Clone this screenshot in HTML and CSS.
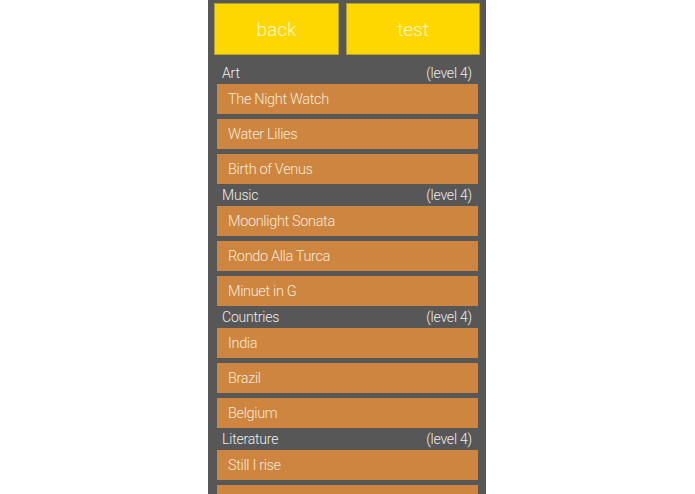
FILE: index.html
```html
<!DOCTYPE html>
<html>
<head>
<meta charset="utf-8">
<link rel="stylesheet" href="styles.css">
</head>
<body>
<div class="column">
  <div class="buttons">
    <div class="btn btn-back">back</div>
    <div class="btn btn-test">test</div>
  </div>
  <div class="section">
    <div class="header"><span>Art</span><span>(level 4)</span></div>
    <div class="items">
      <div class="item">The Night Watch</div>
      <div class="item">Water Lilies</div>
      <div class="item">Birth of Venus</div>
    </div>
  </div>
  <div class="section">
    <div class="header"><span>Music</span><span>(level 4)</span></div>
    <div class="items">
      <div class="item">Moonlight Sonata</div>
      <div class="item">Rondo Alla Turca</div>
      <div class="item">Minuet in G</div>
    </div>
  </div>
  <div class="section">
    <div class="header"><span>Countries</span><span>(level 4)</span></div>
    <div class="items">
      <div class="item">India</div>
      <div class="item">Brazil</div>
      <div class="item">Belgium</div>
    </div>
  </div>
  <div class="section">
    <div class="header"><span>Literature</span><span>(level 4)</span></div>
    <div class="items">
      <div class="item">Still I rise</div>
      <div class="item"></div>
      <div class="item"></div>
    </div>
  </div>
</div>
</body>
</html>
```
FILE: styles.css
```css
html, body {
  margin: 0;
  padding: 0;
  background: #ffffff;
  height: 100%;
  overflow: hidden;
}
body {
  font-family: Roboto, "Liberation Sans", sans-serif;
  font-weight: 300;
}
.column {
  width: 278px;
  margin-left: calc(50% - 139.5px);
  background: #575757;
  height: 494px;
  overflow: hidden;
  box-sizing: border-box;
  padding: 0 8px 0 9px;
}
.buttons {
  display: flex;
  gap: 7px;
  padding-top: 3px;
  margin: 0 -2px 7px -3px;
}
.btn {
  height: 52px;
  box-sizing: border-box;
  background: #ffd700;
  border: 1px solid #b3a22a;
  color: #fff7c4;
  font-size: 19px;
  display: flex;
  align-items: center;
  justify-content: center;
}
.btn-back {
  width: 125px;
}
.btn-test {
  flex: 1;
}
.section {
  display: flex;
  flex-direction: column;
}
.header {
  height: 22px;
  display: flex;
  justify-content: space-between;
  align-items: center;
  padding: 0 6px 0 5px;
  color: #eeeeee;
  font-size: 14px;
  letter-spacing: -0.2px;
}
.items {
  display: flex;
  flex-direction: column;
  gap: 5px;
}
.item {
  height: 30px;
  box-sizing: border-box;
  background: #cd853f;
  color: #f7e9d9;
  font-size: 14.5px;
  letter-spacing: -0.35px;
  display: flex;
  align-items: center;
  padding-left: 11px;
}
```
